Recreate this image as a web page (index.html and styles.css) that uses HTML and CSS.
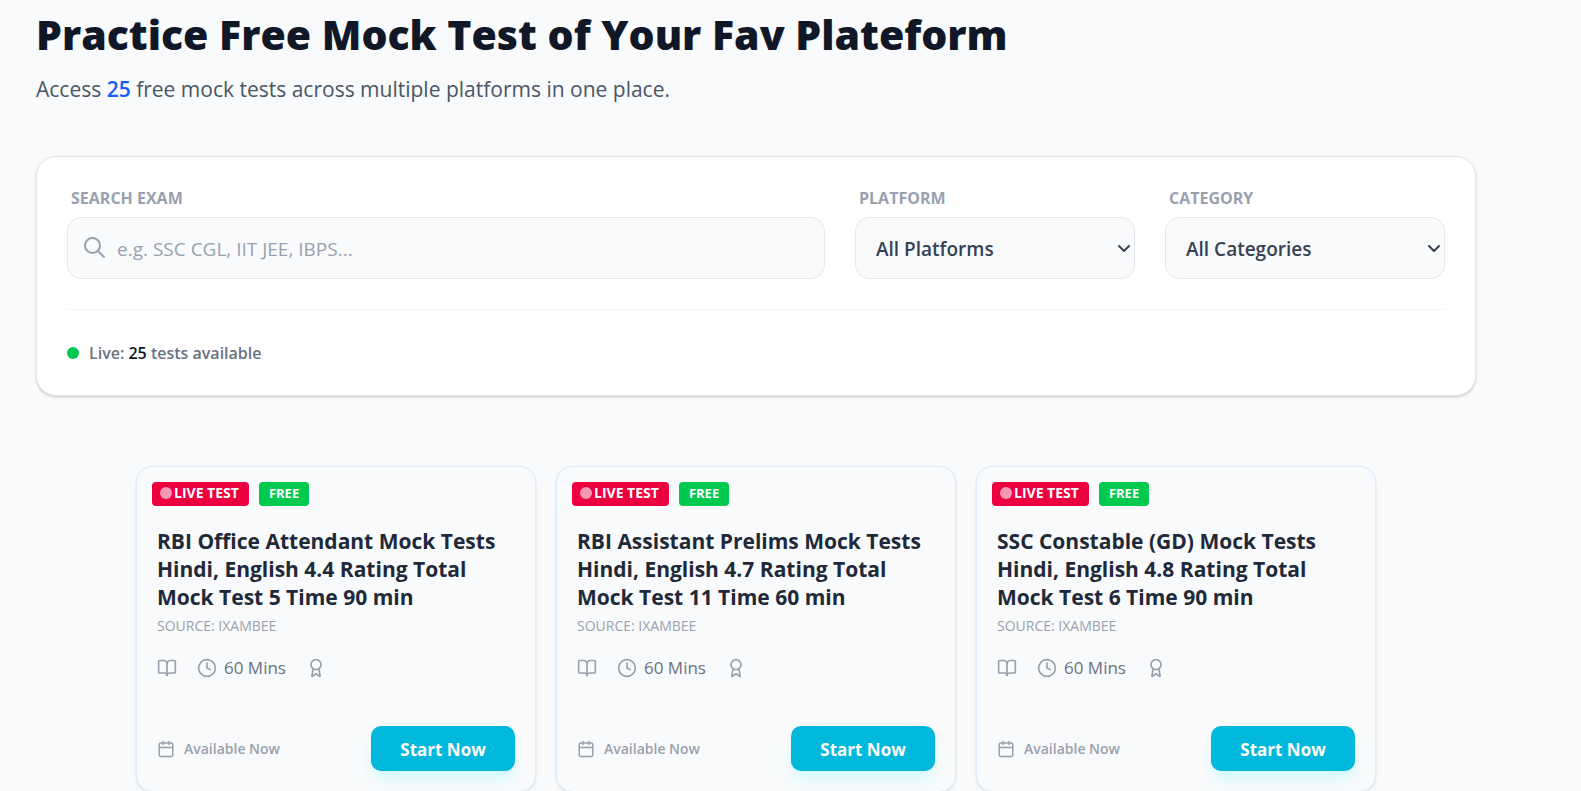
FILE: index.html
```html
<!DOCTYPE html>
<html lang="en">
<head>
<meta charset="utf-8">
<meta name="viewport" content="width=device-width, initial-scale=1">
<title>Free Mock Tests</title>
<link rel="stylesheet" href="styles.css">
</head>
<body>
<svg class="sprite" aria-hidden="true">
  <symbol id="book" viewBox="0 0 24 24"><path d="M12 7v14"/><path d="M3 18a1 1 0 0 1-1-1V4a1 1 0 0 1 1-1h5a4 4 0 0 1 4 4 4 4 0 0 1 4-4h5a1 1 0 0 1 1 1v13a1 1 0 0 1-1 1h-6a3 3 0 0 0-3 3 3 3 0 0 0-3-3z"/></symbol>
  <symbol id="clock" viewBox="0 0 24 24"><circle cx="12" cy="12" r="10"/><path d="M12 6v6l4 2"/></symbol>
  <symbol id="award" viewBox="0 0 24 24"><path d="m15.477 12.89 1.515 8.526a.5.5 0 0 1-.81.47l-3.58-2.687a1 1 0 0 0-1.197 0l-3.586 2.686a.5.5 0 0 1-.81-.469l1.514-8.526"/><circle cx="12" cy="8" r="6"/></symbol>
  <symbol id="calendar" viewBox="0 0 24 24"><path d="M8 2v4M16 2v4M3 10h18"/><rect x="3" y="4" width="18" height="18" rx="2"/></symbol>
</svg>
<main class="page">
  <header class="intro">
    <h1 class="heading">Practice Free Mock Test of Your Fav Plateform</h1>
    <p class="lead">Access <span class="lead-count">25</span> free mock tests across multiple platforms in one place.</p>
  </header>

  <section class="panel">
    <form class="filters">
      <div class="field">
        <label class="label" for="search">SEARCH EXAM</label>
        <div class="control">
          <svg class="search-icon" viewBox="0 0 24 24" aria-hidden="true"><circle cx="9.5" cy="9.5" r="7.5"/><path d="m15 15 6 6"/></svg>
          <input class="box box-search" id="search" type="text" placeholder="e.g. SSC CGL, IIT JEE, IBPS...">
        </div>
      </div>
      <div class="field">
        <label class="label" for="platform">PLATFORM</label>
        <div class="control">
          <select class="box box-select" id="platform"><option>All Platforms</option></select>
          <svg class="chevron" viewBox="0 0 12 8" aria-hidden="true"><path d="m1 1 5 5 5-5"/></svg>
        </div>
      </div>
      <div class="field">
        <label class="label" for="category">CATEGORY</label>
        <div class="control">
          <select class="box box-select" id="category"><option>All Categories</option></select>
          <svg class="chevron" viewBox="0 0 12 8" aria-hidden="true"><path d="m1 1 5 5 5-5"/></svg>
        </div>
      </div>
    </form>
    <div class="status">
      <span class="status-dot"></span>
      <p class="status-text">Live: <span class="status-count">25</span> tests available</p>
    </div>
  </section>

  <section class="cards">
    <article class="card">
      <div class="badges"><span class="badge badge-live"><span class="pulse"></span>LIVE TEST</span><span class="badge badge-free">FREE</span></div>
      <div class="card-body">
        <h2 class="card-title">RBI Office Attendant Mock Tests Hindi, English 4.4 Rating Total Mock Test 5 Time 90 min</h2>
        <p class="source">SOURCE: IXAMBEE</p>
        <div class="meta">
          <svg class="icon"><use href="#book"/></svg>
          <span class="duration"><svg class="icon"><use href="#clock"/></svg>60 Mins</span>
          <svg class="icon"><use href="#award"/></svg>
        </div>
        <div class="card-foot">
          <span class="available"><svg class="icon icon-small"><use href="#calendar"/></svg>Available Now</span>
          <button class="start" type="button">Start Now</button>
        </div>
      </div>
    </article>
    <article class="card">
      <div class="badges"><span class="badge badge-live"><span class="pulse"></span>LIVE TEST</span><span class="badge badge-free">FREE</span></div>
      <div class="card-body">
        <h2 class="card-title">RBI Assistant Prelims Mock Tests Hindi, English 4.7 Rating Total Mock Test 11 Time 60 min</h2>
        <p class="source">SOURCE: IXAMBEE</p>
        <div class="meta">
          <svg class="icon"><use href="#book"/></svg>
          <span class="duration"><svg class="icon"><use href="#clock"/></svg>60 Mins</span>
          <svg class="icon"><use href="#award"/></svg>
        </div>
        <div class="card-foot">
          <span class="available"><svg class="icon icon-small"><use href="#calendar"/></svg>Available Now</span>
          <button class="start" type="button">Start Now</button>
        </div>
      </div>
    </article>
    <article class="card">
      <div class="badges"><span class="badge badge-live"><span class="pulse"></span>LIVE TEST</span><span class="badge badge-free">FREE</span></div>
      <div class="card-body">
        <h2 class="card-title">SSC Constable (GD) Mock Tests Hindi, English 4.8 Rating Total Mock Test 6 Time 90 min</h2>
        <p class="source">SOURCE: IXAMBEE</p>
        <div class="meta">
          <svg class="icon"><use href="#book"/></svg>
          <span class="duration"><svg class="icon"><use href="#clock"/></svg>60 Mins</span>
          <svg class="icon"><use href="#award"/></svg>
        </div>
        <div class="card-foot">
          <span class="available"><svg class="icon icon-small"><use href="#calendar"/></svg>Available Now</span>
          <button class="start" type="button">Start Now</button>
        </div>
      </div>
    </article>
  </section>
</main>
</body>
</html>
```
FILE: styles.css
```css
*,
*::before,
*::after {
  box-sizing: border-box;
}

body {
  margin: 0;
  background: #f9fafb;
  color: #101828;
  font-family: "Segoe UI", "Open Sans", "Noto Sans", sans-serif;
}

h1,
h2,
p {
  margin: 0;
}

svg {
  fill: none;
  stroke: currentColor;
  stroke-width: 2;
  stroke-linecap: round;
  stroke-linejoin: round;
}

.sprite {
  display: none;
}

.page {
  margin-right: 69px;
  padding: 8px 36px 0;
}

.intro {
  margin-bottom: 50px;
}

.heading {
  font-size: 41px;
  font-weight: 800;
  line-height: 52px;
}

.lead {
  margin-top: 12px;
  color: #4a5565;
  font-size: 21px;
  line-height: 34px;
}

.lead-count {
  color: #155dfc;
  font-weight: 600;
}

.panel {
  padding: 30px;
  background: #fff;
  border: 1px solid #e5e7eb;
  border-radius: 20px;
  box-shadow: 0 1px 3px rgba(0, 0, 0, 0.1), 0 1px 2px rgba(0, 0, 0, 0.1);
}

.filters {
  display: grid;
  grid-template-columns: minmax(0, 1fr) 280px 280px;
  gap: 30px;
  padding-bottom: 30px;
  border-bottom: 1px solid #f3f4f6;
}

.label {
  display: block;
  margin-bottom: 8px;
  padding-left: 4px;
  color: #99a1af;
  font-size: 16px;
  font-weight: 700;
  line-height: 22px;
}

.control {
  position: relative;
}

.box {
  display: block;
  width: 100%;
  height: 62px;
  background: #f9fafb;
  border: 1px solid #e5e7eb;
  border-radius: 14px;
  font-family: inherit;
  font-size: 19px;
}

.box-search {
  padding: 2px 20px 0 49px;
  color: #1e2939;
}

.box-search::placeholder {
  color: #99a1af;
}

.box-select {
  padding: 2px 20px 0;
  appearance: none;
  color: #364153;
  font-weight: 600;
}

.search-icon {
  position: absolute;
  top: 19px;
  left: 16px;
  width: 24px;
  height: 24px;
  color: #99a1af;
}

.chevron {
  position: absolute;
  top: 28px;
  right: 5px;
  width: 12px;
  height: 8px;
  color: #364153;
  pointer-events: none;
}

.status {
  display: flex;
  align-items: center;
  gap: 10px;
  padding-top: 31px;
}

.status-dot {
  width: 12px;
  height: 12px;
  background: #00c950;
  border-radius: 50%;
}

.status-text {
  color: #6a7282;
  font-size: 16px;
  font-weight: 600;
  line-height: 24px;
}

.status-count {
  color: #101828;
}

.cards {
  display: grid;
  grid-template-columns: repeat(3, minmax(0, 1fr));
  gap: 20px;
  max-width: 1240px;
  margin: 70px auto 0;
}

.card {
  padding: 15px 20px 20px 15px;
  border: 1px solid #dbeafe;
  border-radius: 16px;
  box-shadow: 0 1px 3px rgba(0, 0, 0, 0.1);
  background: #f9fafb;
}

.badges {
  display: flex;
  gap: 10px;
}

.badge {
  display: flex;
  align-items: center;
  gap: 2px;
  padding: 0 10px 2px;
  border-radius: 4px;
  color: #fff;
  font-size: 13px;
  font-weight: 700;
  line-height: 22px;
}

.badge-live {
  padding-left: 8px;
  background: #ec003f;
  font-size: 14px;
}

.badge-free {
  background: #00c950;
}

.pulse {
  width: 12px;
  height: 12px;
  background: #fff;
  border-radius: 50%;
  opacity: 0.6;
}

.card-body {
  padding: 21px 0 0 5px;
}

.card-title {
  color: #1e2939;
  font-size: 21px;
  font-weight: 700;
  line-height: 28px;
}

.source {
  color: #99a1af;
  font-size: 14px;
  font-weight: 500;
  line-height: 29px;
}

.meta {
  display: flex;
  align-items: center;
  gap: 20px;
  margin-top: 16px;
  color: #99a1af;
}

.duration {
  display: flex;
  align-items: center;
  gap: 7px;
  color: #6a7282;
  font-size: 17px;
  line-height: 24px;
}

.icon {
  flex: none;
  width: 20px;
  height: 20px;
  color: #99a1af;
}

.icon-small {
  width: 18px;
  height: 18px;
}

.card-foot {
  display: flex;
  align-items: center;
  justify-content: space-between;
  margin-top: 46px;
}

.available {
  display: flex;
  align-items: center;
  gap: 9px;
  color: #99a1af;
  font-size: 14px;
  font-weight: 600;
}

.start {
  width: 144px;
  height: 45px;
  padding: 2px 0 0;
  background: #00b8db;
  border: 0;
  border-radius: 10px;
  box-shadow: 0 10px 15px -3px #cefafe, 0 4px 6px -4px #cefafe;
  color: #fff;
  font-family: inherit;
  font-size: 17px;
  font-weight: 700;
}
```
